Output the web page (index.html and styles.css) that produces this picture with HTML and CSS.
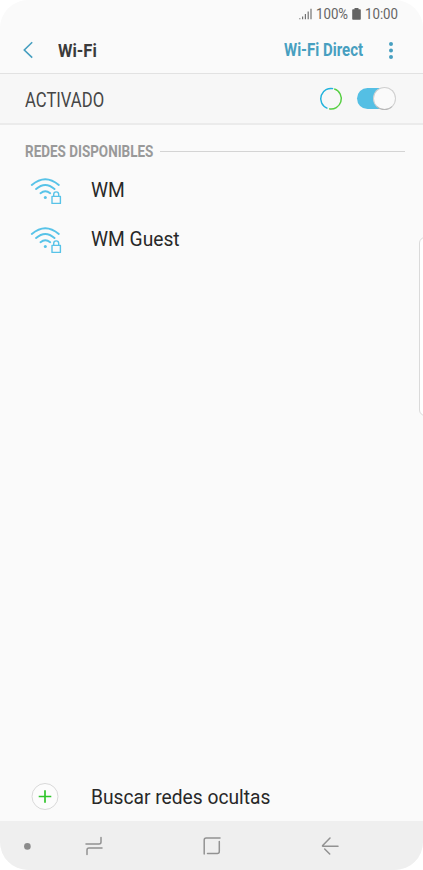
FILE: index.html
```html
<!DOCTYPE html>
<html lang="es">
<head>
<meta charset="utf-8">
<title>Wi-Fi</title>
<link rel="stylesheet" href="styles.css">
</head>
<body>
<div class="phone">
  <div class="status">
    <svg class="signal" width="13" height="12" viewBox="0 0 13 12"><path d="M.8 11.2v-1M3.6 11.2V8.4M6.4 11.2V6M9.2 11.2V3.5M12 11.2V.7" /></svg>
    <span class="battery-text"><span class="narrow">100%</span></span>
    <svg class="battery" width="9" height="12" viewBox="0 0 9 12"><path d="M2.5 0h4v1.2H8q.8 0 .8.8v9q0 .8-.8.8H1q-.8 0-.8-.8V2q0-.8.8-.8h1.500z"/></svg>
    <span class="clock"><span class="narrow">10:00</span></span>
  </div>
  <header class="bar">
    <svg class="back" width="12" height="18" viewBox="0 0 12 18"><path d="M10.200 1.300 2.300 9l7.900 7.600"/></svg>
    <h1 class="title"><span class="narrow">Wi-Fi</span></h1>
    <span class="direct"><span class="narrow">Wi-Fi Direct</span></span>
    <svg class="more" width="4" height="17" viewBox="0 0 4 17"><circle cx="2" cy="2" r="2"/><circle cx="2" cy="8.500" r="2"/><circle cx="2" cy="15" r="2"/></svg>
  </header>
  <section class="switch-row">
    <span class="state"><span class="narrow">ACTIVADO</span></span>
    <svg class="spinner" width="24" height="24" viewBox="0 0 24 24"><circle class="blue" cx="12" cy="11.700" r="10.300" pathLength="360" transform="rotate(110 12 11.700)"/><circle class="green" cx="12" cy="11.700" r="10.300" pathLength="360" transform="rotate(-72 12 11.700)"/></svg>
    <div class="toggle"><div class="knob"></div></div>
  </section>
  <div class="section-head"><h2><span class="narrow">REDES DISPONIBLES</span></h2><div class="rule"></div></div>
  <ul class="networks">
    <li><svg class="wifi" width="32" height="28" viewBox="0 0 32 28"><path class="arc" d="M1.800 8Q15.300 -3.600 28.800 8M6.100 12Q15.300 3.800 24.500 12M10.500 16.200Q15.300 12.300 20.200 16.200"/><circle cx="15.300" cy="20.600" r="1.500"/><path class="lock" d="M22 19.400h8.400v7H22zM23.700 19.400V17.400a2.500 2.500 0 0 1 5 0V19.400"/></svg><span>WM</span></li>
    <li><svg class="wifi" width="32" height="28" viewBox="0 0 32 28"><path class="arc" d="M1.800 8Q15.300 -3.600 28.800 8M6.100 12Q15.300 3.800 24.500 12M10.500 16.200Q15.300 12.300 20.200 16.200"/><circle cx="15.300" cy="20.600" r="1.500"/><path class="lock" d="M22 19.400h8.400v7H22zM23.700 19.400V17.400a2.500 2.500 0 0 1 5 0V19.400"/></svg><span>WM Guest</span></li>
  </ul>
  <div class="hidden-networks">
    <svg width="28" height="28" viewBox="0 0 28 28"><circle cx="14" cy="13.500" r="13"/><path d="M14 7.200v12.600M7.700 13.500h12.600"/></svg>
    <span>Buscar redes ocultas</span>
  </div>
  <nav class="nav">
    <svg class="dot" width="8" height="8" viewBox="0 0 8 8"><circle cx="4.400" cy="4.400" r="3.300"/></svg>
    <svg class="recents" width="18" height="20" viewBox="0 0 18 20"><path d="M1 8h13q2 0 2-2V1.500M17 12H4q-2 0-2 2v4.500"/></svg>
    <svg class="home" width="18" height="18" viewBox="0 0 18 18"><path d="M1.200 17V3q0-2 2-2H17M16.300 4.500V14.500q0 2-2 2H4.500"/></svg>
    <svg class="return" width="18" height="18" viewBox="0 0 18 18"><path d="M9 1 1.700 8.500q-.5.700.2.700H17M3.700 12l5 5"/></svg>
  </nav>
  <div class="edge-handle"></div>
</div>
</body>
</html>
```
FILE: styles.css
```css
* { box-sizing: border-box; }
body { margin: 0; background: #fff; font-family: Roboto, sans-serif; color: #282828; }
svg { display: block; flex: none; fill: none; }
h1, h2, ul { margin: 0; padding: 0; font-weight: 700; }
.phone { position: relative; display: flex; flex-direction: column; width: 423px; height: 870px; overflow: hidden; background: #fafafa; border-radius: 28px; }
.narrow { display: inline-block; white-space: nowrap; transform: scaleX(.88); transform-origin: 0 50%; }
.status { display: flex; align-items: center; height: 27px; padding-left: 299px; font-size: 15px; color: #646464; }
.status .narrow { font-size: 15.500px; transform: scaleX(.855); }
.signal { stroke: #737373; stroke-width: 1.200; }
.battery-text { width: 32px; margin-left: 4px; }
.battery { margin-left: 4px; fill: #646464; }
.clock { margin-left: 4px; width: 34px; }
.bar { display: flex; align-items: center; height: 47px; padding-left: 22px; border-bottom: 1px solid #e2e2e2; }
.back { stroke: #479fc0; stroke-width: 1.600; }
.title { width: 226px; margin-left: 24px; font-size: 19px; color: #3b3b3b; }
.title .narrow { transform: scaleX(.87); }
.direct { width: 80px; font-size: 17.500px; font-weight: 700; color: #479fc0; }
.direct .narrow { transform: scaleX(.858); }
.more { margin-left: 25px; fill: #479fc0; }
.switch-row { display: flex; align-items: center; height: 51px; padding-left: 25px; background: #f7f7f7; border-bottom: 2px solid #ebebeb; }
.state { width: 294px; padding-top: 3px; font-size: 19.500px; color: #464646; }
.state .narrow { transform: scaleX(.854); }
.spinner { stroke-width: 1.500; }
.spinner circle { stroke-dasharray: 172 188; }
.blue { stroke: #22b3dc; }
.green { stroke: #56cf42; }
.toggle { display: flex; justify-content: flex-end; align-items: center; width: 39px; height: 21px; margin-left: 14px; border-radius: 11px; background: linear-gradient(90deg, #54bfe4 28px, transparent 28px); }
.knob { flex: none; width: 23px; height: 23px; border: 1px solid #d0d0d0; border-bottom-color: #b8b8b8; border-radius: 50%; background: #fafafa; }
.section-head { display: flex; align-items: center; height: 41px; padding: 12px 18px 0 25px; }
.section-head h2 { width: 135px; font-size: 16px; color: #999; }
.section-head .narrow { transform: scaleX(.842); }
.rule { flex: 1; height: 1px; background: #d4d4d4; }
.networks { list-style: none; font-weight: 400; }
.networks li { display: flex; align-items: center; height: 49px; padding-left: 30px; font-size: 19.500px; }
.networks span, .hidden-networks span { transform: scaleX(.985); transform-origin: 0 50%; }
.networks span { margin-left: 28.500px; }
.arc { stroke: #58c3e8; stroke-width: 1.900; stroke-linecap: round; }
.lock { stroke: #58c3e8; stroke-width: 1.400; stroke-linejoin: round; }
.wifi circle { fill: #58c3e8; }
.hidden-networks { display: flex; align-items: center; height: 49px; margin-top: auto; padding-left: 31px; font-size: 19.500px; }
.hidden-networks circle { fill: #fcfcfc; stroke: #d8d8d8; stroke-width: 1; }
.hidden-networks path { stroke: #2fc52a; stroke-width: 1.700; }
.hidden-networks span { margin-left: 31.500px; padding-top: 2px; }
.nav { display: flex; align-items: center; height: 49px; padding-left: 23px; background: #efefef; stroke: #929292; stroke-width: 1.500; stroke-linecap: round; }
.dot { fill: #8b8b8b; stroke: none; }
.recents { margin-left: 54px; }
.home { margin-left: 100px; }
.return { margin-left: 100px; }
.edge-handle { position: absolute; left: 419px; top: 237px; width: 12px; height: 179px; border: 1px solid #dadada; border-radius: 6px; background: #fff; }
```
